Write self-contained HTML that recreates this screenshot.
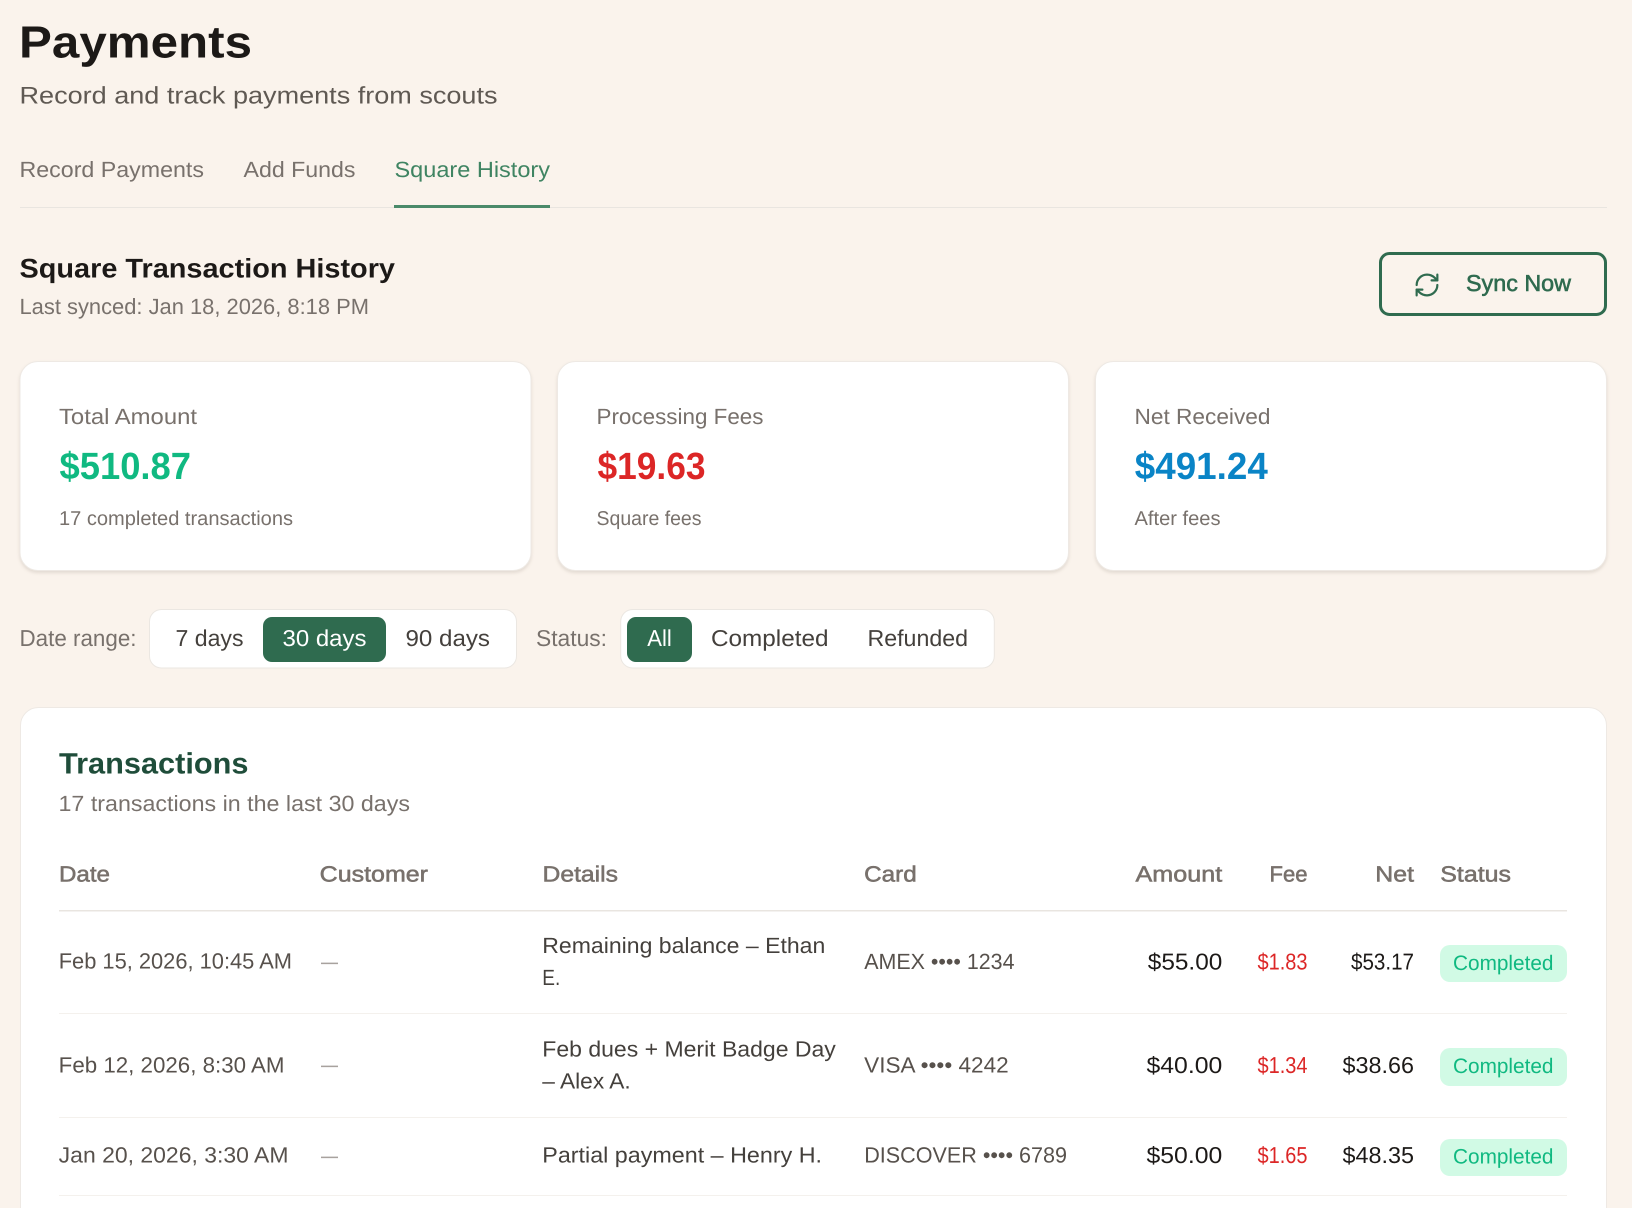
<!DOCTYPE html>
<html lang="en">
<head>
<meta charset="utf-8">
<title>Payments</title>
<style>
html,body{margin:0;padding:0;background:#faf3ec;width:1632px;height:1208px;overflow:hidden}
svg{display:block;position:absolute;left:0;top:0}
text{font-family:"Liberation Sans",sans-serif;fill:#78716c;font-size:22px;text-rendering:geometricPrecision}
.b{font-weight:700}
.h{fill:#78716c;stroke:#78716c;stroke-width:.55px}
.dk{fill:#44403c}
.gy{fill:#57514c}
.blk{fill:#1c1917}
.mo{font-size:23px}
.red{fill:#dc2626}
.gr{fill:#10b981}
.badge{font-size:21px;fill:#10b981}
.s{font-size:20px}
.f{font-size:23px}
.v{font-size:38px}
.card{fill:#fff;stroke:#eee9e4;stroke-width:1;filter:drop-shadow(0 2px 1.5px rgba(70,55,40,.13))}
.seg{fill:#fff;stroke:#ebe7e2;stroke-width:1}
.act{fill:#2f6b4f}
.bdg{fill:#d1fae5}
.dash{fill:#a8a29e}
</style>
</head>
<body>
<svg width="1632" height="1208" viewBox="0 0 1632 1208" xmlns="http://www.w3.org/2000/svg">
<rect width="1632" height="1208" fill="#faf3ec"/>

<text x="19" y="57.5" class="b blk" style="font-size:45px" textLength="233" lengthAdjust="spacingAndGlyphs">Payments</text>
<text x="19.500" y="103.500" style="font-size:24px;fill:#5f5953" textLength="478" lengthAdjust="spacingAndGlyphs">Record and track payments from scouts</text>

<rect x="20" y="207" width="1587" height="1" fill="#e9e5e0"/>
<text x="19.500" y="177" textLength="184.500" lengthAdjust="spacingAndGlyphs">Record Payments</text>
<text x="243.500" y="177" textLength="112" lengthAdjust="spacingAndGlyphs">Add Funds</text>
<text x="394.500" y="177" style="fill:#3f8462" textLength="155.500" lengthAdjust="spacingAndGlyphs">Square History</text>
<rect x="394" y="205" width="156" height="3" fill="#4a8a6a"/>

<text x="19.500" y="277.500" class="b blk" style="font-size:27px" textLength="375.500" lengthAdjust="spacingAndGlyphs">Square Transaction History</text>
<text x="19.500" y="314" textLength="349.500" lengthAdjust="spacingAndGlyphs">Last synced: Jan 18, 2026, 8:18 PM</text>

<rect x="1380.500" y="253.500" width="225" height="61" rx="9" fill="none" stroke="#2f6b4f" stroke-width="3"/>
<g transform="translate(1413.200 271.200) scale(1.15)" fill="none" stroke="#2f6b4f" stroke-width="1.9" stroke-linecap="round" stroke-linejoin="round">
<path d="M3 12a9 9 0 0 1 9-9 9.750 9.750 0 0 1 6.740 2.740L21 8"/>
<path d="M21 3v5h-5"/>
<path d="M21 12a9 9 0 0 1-9 9 9.750 9.750 0 0 1-6.740-2.740L3 16"/>
<path d="M8 16H3v5"/>
</g>
<text x="1466" y="291" style="font-size:23px;fill:#2f6b4f;stroke:#2f6b4f;stroke-width:.6px" textLength="105" lengthAdjust="spacingAndGlyphs">Sync Now</text>

<rect class="card" x="20" y="361.500" width="511" height="209" rx="18"/>
<text x="59" y="424" textLength="138" lengthAdjust="spacingAndGlyphs">Total Amount</text>
<text x="59.500" y="479" class="b gr v" textLength="131.500" lengthAdjust="spacingAndGlyphs">$510.87</text>
<text x="59" y="525" class="s" textLength="234" lengthAdjust="spacingAndGlyphs">17 completed transactions</text>

<rect class="card" x="557.500" y="361.500" width="511" height="209" rx="18"/>
<text x="596.500" y="424" textLength="167" lengthAdjust="spacingAndGlyphs">Processing Fees</text>
<text x="597.500" y="479" class="b red v" textLength="108" lengthAdjust="spacingAndGlyphs">$19.63</text>
<text x="596.500" y="525" class="s" textLength="105" lengthAdjust="spacingAndGlyphs">Square fees</text>

<rect class="card" x="1095.500" y="361.500" width="511" height="209" rx="18"/>
<text x="1134.500" y="424" textLength="136" lengthAdjust="spacingAndGlyphs">Net Received</text>
<text x="1134.800" y="479" class="b v" style="fill:#0a84c6" textLength="133" lengthAdjust="spacingAndGlyphs">$491.24</text>
<text x="1134.500" y="525" class="s" textLength="86" lengthAdjust="spacingAndGlyphs">After fees</text>

<text x="19.500" y="646" class="f" textLength="117" lengthAdjust="spacingAndGlyphs">Date range:</text>
<rect class="seg" x="149.500" y="609.500" width="367" height="58.500" rx="12"/>
<rect class="act" x="263" y="617" width="123" height="45" rx="9"/>
<text x="175.500" y="646" class="dk f" textLength="68" lengthAdjust="spacingAndGlyphs">7 days</text>
<text x="282.500" y="646" class="f" style="fill:#fff" textLength="84" lengthAdjust="spacingAndGlyphs">30 days</text>
<text x="405.500" y="646" class="dk f" textLength="84.500" lengthAdjust="spacingAndGlyphs">90 days</text>

<text x="536" y="646" class="f" textLength="71" lengthAdjust="spacingAndGlyphs">Status:</text>
<rect class="seg" x="620.700" y="609.500" width="373.600" height="58.500" rx="12"/>
<rect class="act" x="627" y="617" width="65" height="45" rx="9"/>
<text x="647.300" y="646" class="f" style="fill:#fff" textLength="24.500" lengthAdjust="spacingAndGlyphs">All</text>
<text x="711" y="646" class="dk f" textLength="117.500" lengthAdjust="spacingAndGlyphs">Completed</text>
<text x="867.500" y="646" class="dk f" textLength="100.500" lengthAdjust="spacingAndGlyphs">Refunded</text>

<rect x="20.500" y="707.500" width="1586" height="540" rx="18" fill="#fff" stroke="#eee9e4"/>
<text x="59" y="773.500" class="b" style="font-size:29.500px;fill:#1f4d3a" textLength="189.500" lengthAdjust="spacingAndGlyphs">Transactions</text>
<text x="58.500" y="811" textLength="351.500" lengthAdjust="spacingAndGlyphs">17 transactions in the last 30 days</text>

<text x="59" y="881.700" class="h" textLength="51" lengthAdjust="spacingAndGlyphs">Date</text>
<text x="319.700" y="881.700" class="h" textLength="108.300" lengthAdjust="spacingAndGlyphs">Customer</text>
<text x="542.500" y="881.700" class="h" textLength="75.500" lengthAdjust="spacingAndGlyphs">Details</text>
<text x="864.200" y="881.700" class="h" textLength="52.500" lengthAdjust="spacingAndGlyphs">Card</text>
<text x="1135.500" y="881.700" class="h" textLength="86.800" lengthAdjust="spacingAndGlyphs">Amount</text>
<text x="1269.500" y="881.700" class="h" textLength="38" lengthAdjust="spacingAndGlyphs">Fee</text>
<text x="1375.300" y="881.700" class="h" textLength="38.700" lengthAdjust="spacingAndGlyphs">Net</text>
<text x="1440.300" y="881.700" class="h" textLength="70.700" lengthAdjust="spacingAndGlyphs">Status</text>
<rect x="59" y="910" width="1508" height="1.500" fill="#e9e5e0"/>

<!-- Row 1 -->
<text x="58.700" y="968.500" class="gy" textLength="233.300" lengthAdjust="spacingAndGlyphs">Feb 15, 2026, 10:45 AM</text>
<text x="321" y="969" class="dash" textLength="17" lengthAdjust="spacingAndGlyphs">—</text>
<text x="542.300" y="953" class="dk" textLength="283" lengthAdjust="spacingAndGlyphs">Remaining balance – Ethan</text>
<text x="542.300" y="985" class="dk" textLength="18" lengthAdjust="spacingAndGlyphs">E.</text>
<text x="864.200" y="969" class="gy" textLength="150.300" lengthAdjust="spacingAndGlyphs">AMEX •••• 1234</text>
<text x="1147.800" y="969.500" class="blk mo" textLength="74.500" lengthAdjust="spacingAndGlyphs">$55.00</text>
<text x="1257.500" y="969.500" class="red mo" textLength="50" lengthAdjust="spacingAndGlyphs">$1.83</text>
<text x="1351" y="969.500" class="blk mo" textLength="63" lengthAdjust="spacingAndGlyphs">$53.17</text>
<rect class="bdg" x="1440" y="945" width="127" height="37" rx="10"/>
<text x="1453" y="970" class="badge" textLength="100.500" lengthAdjust="spacingAndGlyphs">Completed</text>
<rect x="59" y="1013" width="1508" height="1" fill="#f4f1ed"/>

<!-- Row 2 -->
<text x="58.700" y="1072.500" class="gy" textLength="225.800" lengthAdjust="spacingAndGlyphs">Feb 12, 2026, 8:30 AM</text>
<text x="321" y="1072" class="dash" textLength="17" lengthAdjust="spacingAndGlyphs">—</text>
<text x="542.300" y="1056.700" class="dk" textLength="293.500" lengthAdjust="spacingAndGlyphs">Feb dues + Merit Badge Day</text>
<text x="542.300" y="1088.700" class="dk" textLength="88.400" lengthAdjust="spacingAndGlyphs">– Alex A.</text>
<text x="864.200" y="1072.700" class="gy" textLength="144.500" lengthAdjust="spacingAndGlyphs">VISA •••• 4242</text>
<text x="1146.500" y="1073" class="blk mo" textLength="75.800" lengthAdjust="spacingAndGlyphs">$40.00</text>
<text x="1257.500" y="1073" class="red mo" textLength="50" lengthAdjust="spacingAndGlyphs">$1.34</text>
<text x="1342.500" y="1073" class="blk mo" textLength="71.500" lengthAdjust="spacingAndGlyphs">$38.66</text>
<rect class="bdg" x="1440" y="1048" width="127" height="38" rx="10"/>
<text x="1453" y="1073" class="badge" textLength="100.500" lengthAdjust="spacingAndGlyphs">Completed</text>
<rect x="59" y="1117" width="1508" height="1" fill="#f4f1ed"/>

<!-- Row 3 -->
<text x="58.700" y="1162.700" class="gy" textLength="229.800" lengthAdjust="spacingAndGlyphs">Jan 20, 2026, 3:30 AM</text>
<text x="321" y="1163" class="dash" textLength="17" lengthAdjust="spacingAndGlyphs">—</text>
<text x="542.300" y="1162.700" class="dk" textLength="279.700" lengthAdjust="spacingAndGlyphs">Partial payment – Henry H.</text>
<text x="864.200" y="1162.700" class="gy" textLength="202.800" lengthAdjust="spacingAndGlyphs">DISCOVER •••• 6789</text>
<text x="1146.500" y="1163" class="blk mo" textLength="75.800" lengthAdjust="spacingAndGlyphs">$50.00</text>
<text x="1257.500" y="1163" class="red mo" textLength="50" lengthAdjust="spacingAndGlyphs">$1.65</text>
<text x="1342.500" y="1163" class="blk mo" textLength="71.500" lengthAdjust="spacingAndGlyphs">$48.35</text>
<rect class="bdg" x="1440" y="1139" width="127" height="37" rx="10"/>
<text x="1453" y="1163.700" class="badge" textLength="100.500" lengthAdjust="spacingAndGlyphs">Completed</text>
<rect x="59" y="1195" width="1508" height="1" fill="#f4f1ed"/>
</svg>
</body>
</html>
